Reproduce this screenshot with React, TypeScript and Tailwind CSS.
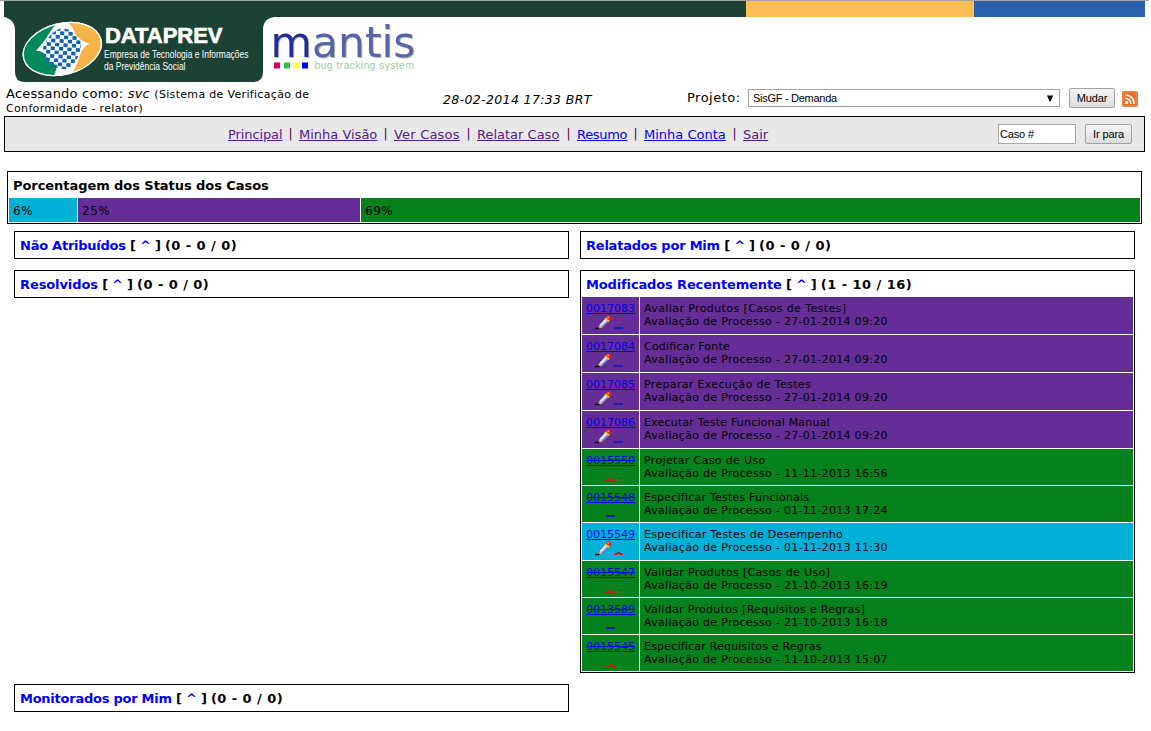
import React from 'react';

type Row = { id: string; title: string; track: string; when: string; kind: 'p' | 'g' | 'c'; edit?: boolean; up?: boolean };

const rows: Row[] = [
  { id: '0017083', title: 'Avaliar Produtos [Casos de Testes]', track: 'tracking-[0.4px]', when: '27-01-2014 09:20', kind: 'p', edit: true },
  { id: '0017084', title: 'Codificar Fonte', track: 'tracking-[0.2px]', when: '27-01-2014 09:20', kind: 'p', edit: true },
  { id: '0017085', title: 'Preparar Execução de Testes', track: 'tracking-[0.34px]', when: '27-01-2014 09:20', kind: 'p', edit: true },
  { id: '0017086', title: 'Executar Teste Funcional Manual', track: 'tracking-[0.2px]', when: '27-01-2014 09:20', kind: 'p', edit: true },
  { id: '0015550', title: 'Projetar Caso de Uso', track: 'tracking-[0.36px]', when: '11-11-2013 16:56', kind: 'g', up: true },
  { id: '0015548', title: 'Especificar Testes Funcionais', track: 'tracking-[0.22px]', when: '01-11-2013 17:24', kind: 'g' },
  { id: '0015549', title: 'Especificar Testes de Desempenho', track: 'tracking-[0.25px]', when: '01-11-2013 11:30', kind: 'c', edit: true, up: true },
  { id: '0015547', title: 'Validar Produtos [Casos de Uso]', track: 'tracking-[0.35px]', when: '21-10-2013 16:19', kind: 'g', up: true },
  { id: '0013589', title: 'Validar Produtos [Requisitos e Regras]', track: 'tracking-[0.3px]', when: '21-10-2013 16:18', kind: 'g' },
  { id: '0015545', title: 'Especificar Requisitos e Regras', track: 'tracking-[0.2px]', when: '11-10-2013 15:07', kind: 'g', up: true },
];

const tones = { p: 'bg-[#652d96]', g: 'bg-[#05821c]', c: 'bg-[#00b0d6]' };

function Pencil() {
  return (
    <svg width="17" height="16" viewBox="0 0 17 16" className="block">
      <path d="M0 13.5H4.2" stroke="#000" strokeWidth="1.4" />
      <path d="M3.4 13.4L4.2 10L10.6 3L14.2 5.8L7.4 12.6Z" fill="#c3caf2" stroke="#5b5878" strokeWidth=".6" />
      <path d="M5.4 10.2L11.4 3.8" stroke="#f4f6ff" strokeWidth="1.2" />
      <path d="M7.2 12.2L13.6 5.8" stroke="#6d68a4" strokeWidth="1.1" />
      <path d="M3.2 13.6L4.2 10.4L7 12.4Z" fill="#e8b060" />
      <path d="M2.4 14.2L5 13.2L3.6 12.2Z" fill="#000" />
      <path d="M10 3L14.2 6.2" stroke="#f2c22c" strokeWidth="2" />
      <path d="M10.8 2.2Q12.2 -.4 14.6 .6Q17.4 2.2 15.4 5.2Q13.4 5 10.8 2.2Z" fill="#d4281c" />
      <circle cx="13.2" cy="2.2" r="1" fill="#ff8a70" />
    </svg>
  );
}

function Priority({ up, low }: { up?: boolean; low?: boolean }) {
  return (
    <svg width="9" height="16" viewBox="0 0 9 16" className="block">
      {up ? (
        <path d="M3 11h3v1h2v1h1v1H6V13H3v1H0V13H1V12H3z" fill="#f00" />
      ) : (
        <rect y={low ? 12 : 11} width="9" height="2" fill="#1c1ca8" />
      )}
    </svg>
  );
}

function Panel({ title, count, track, children }: { title: string; count: string; track: string; children?: React.ReactNode }) {
  return (
    <section className="border border-black self-start w-[555px]">
      <h2 className="h-[26px] pl-[5px] pt-[2px] flex items-center text-[13px] font-bold whitespace-pre tracking-[-0.25px]">
        <span className={`text-[#0000fa] ${track}`}>{title}</span>
        <span> [ <span className="text-[#0000fa]">^</span> ] </span>
        <span className="tracking-[0.45px]">{count}</span>
      </h2>
      {children}
    </section>
  );
}

function Logo() {
  const cells: React.ReactNode[] = [];
  for (let r = 0; r < 12; r++)
    for (let c = 0; c < 12; c++)
      if ((r + c) % 2 === 0)
        cells.push(<rect key={r * 12 + c} x={38 + c * 4.2} y={27.5 + r * 3.9} width="4.2" height="3.7" rx=".4" fill="#1762ac" />);
  return (
    <svg width="430" height="82" viewBox="0 0 430 82" className="block shrink-0">
      <defs>
        <clipPath id="globe"><path d="M60 28.5C70 27.5 79 34 81 43C81 52 77 62 69 69C58 71 44 63 42 53C43 43 50 33 60 28.5Z" /></clipPath>
        <clipPath id="oval"><ellipse cx="62.3" cy="49" rx="40" ry="25.6" transform="rotate(-14 62.3 49)" /></clipPath>
      </defs>
      <path d="M4 0H430V17H275Q263 18 263 30V72Q263 82 253 82H25Q15 82 15 72V31Q15 19 4 17Z" fill="#1b4234" />
      <ellipse cx="62.3" cy="49" rx="40.4" ry="26.2" transform="rotate(-14 62.3 49)" fill="#fff" />
      <g clipPath="url(#oval)">
        <path d="M60 20C53 27 50 32 47 37C43 43 39 47 36 51C41 51 44 52 46 57C49 63 53 64 57 65C57 69 55 72 53 78H10V20Z" fill="#008a5c" />
        <path d="M63 20C69 23 72 25 74 31C77 38 84 43 89.5 43.5C85 46 82 49 80 55C78 62 75 68 70 78H112V15H63Z" fill="#f8b34b" />
      </g>
      <ellipse cx="62.3" cy="49" rx="39.8" ry="25.4" transform="rotate(-14 62.3 49)" fill="none" stroke="#fff" strokeWidth="1.3" />
      <g clipPath="url(#globe)"><g transform="rotate(4 62 49)">{cells}</g></g>
      <g fill="#fff" fontFamily="Liberation Sans, Arial, sans-serif">
        <text x="105" y="43" fontSize="22" fontWeight="bold" stroke="#fff" strokeWidth=".7" textLength="117.5" lengthAdjust="spacingAndGlyphs">DATAPREV</text>
        <text x="104" y="58" fontSize="10.5" textLength="144.5" lengthAdjust="spacingAndGlyphs">Empresa de Tecnologia e Informações</text>
        <text x="104" y="70" fontSize="10.5" textLength="81.5" lengthAdjust="spacingAndGlyphs">da Previdência Social</text>
      </g>
      <text className="drop-shadow-[1px_1px_0_#a9c9a6]" x="270.5" y="57" fill="#5a62ac" fontFamily="DejaVu Sans, Verdana, sans-serif" fontSize="42" textLength="145" lengthAdjust="spacingAndGlyphs"><tspan fill="#252a9c">m</tspan>antis</text>
      <path d="M274 62.5h6v6h-6z" fill="#d9005b" />
      <path d="M284 62.5h6v6h-6z" fill="#2fc04c" />
      <path d="M293 62.5h6v6h-6z" fill="#ffff3d" />
      <path d="M302 62.5h6v6h-6z" fill="#00f" />
      <text x="314.5" y="69" fontSize="10.5" fill="#a5cba5" fontFamily="Liberation Sans, Arial, sans-serif" textLength="99.5">bug tracking system</text>
    </svg>
  );
}

const links: [string, string, string][] = [
  ['Principal', 'text-[#551a8b] tracking-[-0.1px]', 'w-[54px]'],
  ['Minha Visão', 'text-[#551a8b]', 'w-[78px]'],
  ['Ver Casos', 'text-[#551a8b] tracking-[0.2px]', 'w-[66px]'],
  ['Relatar Caso', 'text-[#551a8b]', 'w-[83px]'],
  ['Resumo', 'text-[#0000ee] tracking-[-0.3px]', 'w-[50px]'],
  ['Minha Conta', 'text-[#0000ee]', 'w-[82px]'],
  ['Sair', 'text-[#551a8b]', 'w-[25px]'],
];

const button = 'h-[20px] border border-[#a0a0a0] rounded-[2px] bg-linear-to-b from-[#f5f5f5] to-[#dcdcdc] flex items-center justify-center text-[11px] font-["Liberation_Sans",Arial,sans-serif] tracking-[-0.1px]';

export default function App() {
  return (
    <div className="w-[1151px] h-[731px] overflow-hidden bg-white text-black font-['DejaVu_Sans',Verdana,sans-serif]">
      <div className="h-px w-[1149px] bg-[#a5a5a5]" />
      <header className="flex items-start h-[81px] pr-[6px]">
        <div className="w-[430px] h-[81px] overflow-hidden shrink-0 flex items-end"><Logo /></div>
        <div className="h-4 w-[316px] bg-[#1b4234]" />
        <div className="h-4 w-[228px] bg-[#ffbe54]" />
        <div className="h-4 w-[171px] bg-[#2a5fab]" />
      </header>

      <div className="h-[34px] flex items-start text-[13px]">
        <div className="w-[350px] pl-[6px] pt-[5px] whitespace-nowrap leading-[14px]">
          <div className="tracking-[0.22px] h-[14px]">Acessando como: <i>svc</i> <span className="text-[11px] tracking-[0.32px]">(Sistema de Verificação de</span></div>
          <div className="text-[11px] leading-[15px] tracking-[0.34px]">Conformidade - relator)</div>
        </div>
        <div className="w-[337px] pl-[93px] pt-[10px] text-[12.5px] tracking-[0.36px] leading-[16px] italic whitespace-nowrap">28-02-2014 17:33 BRT</div>
        <div className="pt-[8px] w-[61px] leading-[16px] tracking-[0.5px] whitespace-nowrap">Projeto:</div>
        <div className="mt-[7px] w-[312px] h-[18px] border border-[#a5a5a5] flex items-center justify-between pl-[4px] pr-[5px] text-[11px] tracking-[-0.28px] font-['Liberation_Sans',Arial,sans-serif]">
          <span>SisGF - Demanda</span>
          <svg width="8" height="7" viewBox="0 0 8 7"><path d="M1 .5H7.2L4.6 6.5H3.6Z" /></svg>
        </div>
        <div className={button + ' ml-[9px] mt-[6px] w-[46px]'}>Mudar</div>
        <svg width="16" height="16" viewBox="0 0 16 16" className="ml-[7px] mt-[9px]">
          <rect width="16" height="16" rx="2" fill="#e8702a" />
          <rect x="1" y="1" width="14" height="14" rx="1" fill="none" stroke="#f39a5e" strokeWidth=".8" />
          <circle cx="4.6" cy="11.6" r="1.5" fill="#fff" />
          <path d="M3.2 7.4A5.4 5.4 0 0 1 8.7 13M3.2 4A8.8 8.8 0 0 1 12.2 13" fill="none" stroke="#fff" strokeWidth="1.7" />
        </svg>
      </div>

      <nav className="ml-[4px] w-[1141px] h-[36px] border border-black bg-[#e8e8e8] flex items-center text-[13px]">
        <div className="ml-[223px] w-[770px] pt-[2px] flex">
          {links.map(([label, tone, width], i) => (
            <React.Fragment key={label}>
              {i > 0 && <span className="w-[17px] text-center text-[#400040] shrink-0 text-[12px]">|</span>}
              <a className={`${tone} ${width} underline whitespace-nowrap shrink-0`}>{label}</a>
            </React.Fragment>
          ))}
        </div>
        <div className="w-[78px] h-[20px] bg-white border border-[#a8a8a8] flex items-center pl-[1px] text-[11px] tracking-[-0.15px] font-['Liberation_Sans',Arial,sans-serif]">Caso #</div>
        <div className={button + ' ml-[9px] w-[47px]'}>Ir para</div>
      </nav>

      <section className="mt-[19px] ml-[7px] w-[1135px] h-[53px] border border-black px-px">
        <h2 className="h-[26px] pl-[4px] pt-px flex items-center text-[13px] font-bold"><span className="tracking-[-0.06px]">Porcentagem dos Status dos Casos</span></h2>
        <div className="flex gap-px h-[24px] text-[12px] tracking-[0.5px] leading-[26px]">
          <div className="w-[68px] pl-[4px] bg-[#00b0d6]">6%</div>
          <div className="w-[282px] pl-[4px] bg-[#652d96]">25%</div>
          <div className="flex-1 pl-[4px] bg-[#05821c]">69%</div>
        </div>
      </section>

      <main className="mt-[7px] ml-[14px] w-[1121px] grid grid-cols-[555px_555px] gap-[11px]">
        <Panel title="Não Atribuídos" count="(0 - 0 / 0)" track="tracking-[-0.25px]" />
        <Panel title="Relatados por Mim" count="(0 - 0 / 0)" track="tracking-[-0.22px]" />
        <Panel title="Resolvidos" count="(0 - 0 / 0)" track="tracking-[-0.1px]" />
        <Panel title="Modificados Recentemente" count="(1 - 10 / 16)" track="tracking-[-0.14px]">
          <div className="px-px pb-px flex flex-col gap-px">
            {rows.map((r) => (
              <div key={r.id} className={`flex gap-px ${r.edit ? 'h-[37px]' : 'h-[36px]'}`}>
                <div className={`w-[57px] pt-[5px] ${tones[r.kind]}`}>
                  <div className="h-[13px] flex justify-center text-[11px] leading-[14px]">
                    <a className={`text-[#0000ee] ${r.kind === 'g' ? '[text-decoration:underline_line-through]' : 'underline'}`}>{r.id}</a>
                  </div>
                  <div className={`flex justify-center gap-[2px] ${r.edit ? 'pr-[3px]' : ''}`}>
                    {r.edit && <Pencil />}
                    <Priority up={r.up} low={r.edit} />
                  </div>
                </div>
                <div className={`flex-1 pl-[4px] pt-[5px] text-[11px] leading-[13px] whitespace-nowrap ${tones[r.kind]}`}>
                  <div className={r.track}>{r.title}</div>
                  <div className="tracking-[0.3px]">Avaliação de Processo - {r.when}</div>
                </div>
              </div>
            ))}
          </div>
        </Panel>
        <Panel title="Monitorados por Mim" count="(0 - 0 / 0)" track="tracking-[-0.25px]" />
      </main>
    </div>
  );
}
